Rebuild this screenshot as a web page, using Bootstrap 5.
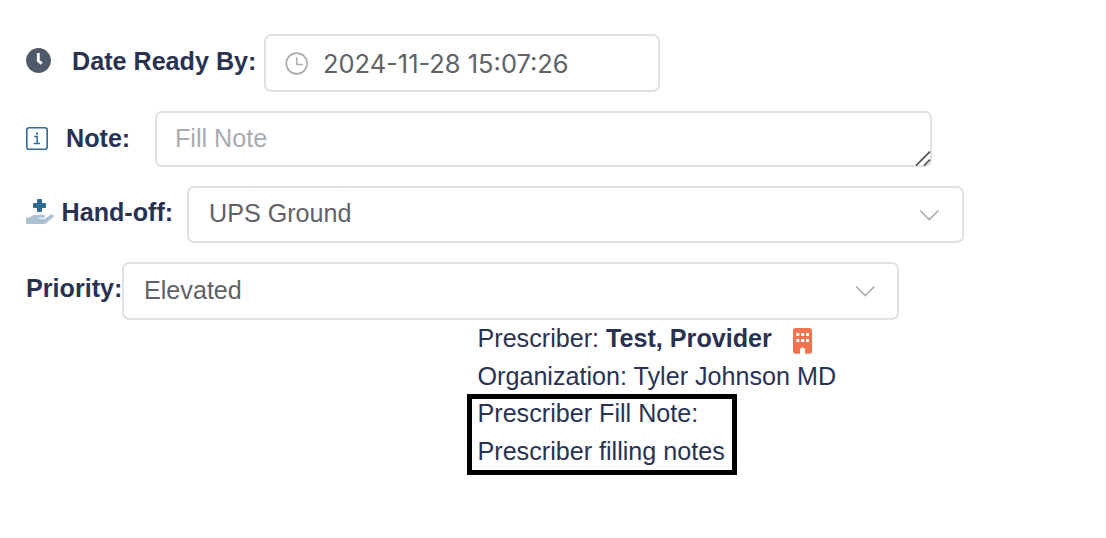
<!DOCTYPE html>
<html lang="en">
<head>
<meta charset="utf-8">
<meta name="viewport" content="width=device-width, initial-scale=1">
<title>Prescription fill</title>
<link href="https://cdn.jsdelivr.net/npm/bootstrap@5.3.0/dist/css/bootstrap.min.css" rel="stylesheet">
<style>
body{font-family:"Liberation Sans",Arial,sans-serif;font-size:25.15px;line-height:37.6px;color:#2a3252;background:#fff;overflow:hidden}
.order-form{padding:34px 0 0 26px}
.field-row{margin-bottom:19px}
.field-name{font-weight:700;white-space:nowrap;flex:none}
.field-name svg{flex:none;display:block}
.field-box{border:2px solid #dfe0e8;border-radius:7px;padding:0 21px 0 20px;color:#606266;line-height:37.6px;background:#fff;height:58px;width:777px;flex:none}
.date-box{width:396px;padding-left:19px;font-family:Inter,sans-serif;font-size:25.45px}
.date-box span{margin:1px 0 0 14px}
.note-box{height:56px;color:#a8abb2;padding-left:18px}
.hand-box{height:57px;padding-right:22px}
.hand-box span{margin-top:-1px}
.grip{right:-1px;bottom:-1px}
.w-date{width:238px;padding-bottom:3px}
.w-date svg{margin-top:-2px}
.w-note{width:129px;padding-bottom:1px}
.w-hand{width:161px;padding-bottom:4px}
.w-hand svg{margin-top:-2px}
.w-prio{width:96px;padding-bottom:5px}
.provider-info{margin-left:477.5px}
.fill-note{border:5px solid #000;margin-left:-10.5px;width:270px;height:81px;padding-left:5.5px;margin-top:-1px}
.fill-note div{margin-top:-4px}
</style>
</head>
<body>
<main class="order-form">
  <div class="field-row d-flex align-items-center">
    <div class="field-name w-date d-flex align-items-center">
      <svg width="25" height="25" viewBox="0 0 25 25"><circle cx="12.5" cy="12.5" r="12.4" fill="#4e5a6a"/><path d="M12.3 5v7.8l3.5 2.9" fill="none" stroke="#fff" stroke-width="2.8"/></svg>
      <span style="margin-left:21px">Date Ready By:</span>
    </div>
    <div class="field-box date-box d-flex align-items-center">
      <svg class="flex-shrink-0" width="24" height="24" viewBox="0 0 24 24" fill="none" stroke="#a8abb2" stroke-width="1.6"><circle cx="11.7" cy="12.5" r="10.4"/><path d="M11.7 6.200V13.500h6.200"/></svg>
      <span>2024-11-28 15:07:26</span>
    </div>
  </div>
  <div class="field-row d-flex align-items-center">
    <div class="field-name w-note d-flex align-items-center">
      <svg width="22" height="23" viewBox="0 0 22 23" fill="none" stroke="#2d6a94"><rect x=".8" y=".8" width="20.4" height="21.4" rx="2.3" stroke-width="1.6"/><path d="M8.2 9.6h3v7M7.800 16.600h6.300" stroke-width="1.5"/><path d="M10 6.600h2" stroke-width="2"/></svg>
      <span style="margin-left:18px">Note:</span>
    </div>
    <div class="field-box note-box position-relative d-flex align-items-center"><span>Fill Note</span>
      <svg class="grip position-absolute" width="16" height="15" viewBox="0 0 16 15" fill="none" stroke="#555" stroke-width="1.8"><path d="M1 14.600 15 .6M9 14.600l6-6"/></svg>
    </div>
  </div>
  <div class="field-row d-flex align-items-center">
    <div class="field-name w-hand d-flex align-items-center">
      <svg width="28" height="26" viewBox="0 0 28 26"><path d="M12 0h3q1 0 1 1v3h3q1 0 1 1v3q0 1-1 1h-3v3q0 1-1 1h-3q-1 0-1-1V9H8Q7 9 7 8V5q0-1 1-1h3V1q0-1 1-1z" fill="#2d6a94"/><path d="M1 18.500h2.500l2-1.500Q7.500 15.800 10 15.800h7.200q1.700 0 1.700 1.500t-1.700 1.500h-4.500v1h6.100l5.400-3.800q1.800-1.100 3 .1 1.100 1.300-.3 2.500l-6.100 4.800Q19.300 25 17.200 25H1q-1 0-1-1v-4.500q0-1 1-1z" fill="#a9c1d1"/></svg>
      <span style="margin-left:7.5px">Hand-off:</span>
    </div>
    <div class="field-box hand-box d-flex align-items-center justify-content-between"><span>UPS Ground</span>
      <svg width="21" height="12" viewBox="0 0 21 12" fill="none" stroke="#a8abb2" stroke-width="1.6"><path d="m1.200 1.500 9.100 9 9.100-9"/></svg>
    </div>
  </div>
  <div class="d-flex align-items-center">
    <div class="field-name w-prio">Priority:</div>
    <div class="field-box d-flex align-items-center justify-content-between"><span>Elevated</span>
      <svg width="21" height="12" viewBox="0 0 21 12" fill="none" stroke="#a8abb2" stroke-width="1.6"><path d="m1.200 1.500 9.100 9 9.100-9"/></svg>
    </div>
  </div>
</main>
<section class="provider-info">
  <div class="d-flex align-items-center">
    <span>Prescriber: <b>Test, Provider</b></span>
    <svg style="margin:5px 0 0 21px" width="19" height="26" viewBox="0 0 19 26"><path fill="#f07450" fill-rule="evenodd" d="M2.500 0h14Q19 0 19 2.500v21q0 2.300-2.500 2.300H12V22q0-2.500-2.500-2.500T7 22v3.800H2.500Q0 25.800 0 23.500v-21Q0 0 2.500 0zM3.300 5v3h3V5zm4.800 0v3h3V5zm4.800 0v3h3V5zM3.300 11v3h3v-3zm4.800 0v3h3v-3zm4.800 0v3h3v-3z"/></svg>
  </div>
  <div>Organization: Tyler Johnson MD</div>
  <div class="fill-note"><div>Prescriber Fill Note:<br>Prescriber filling notes</div></div>
</section>
<script src="https://cdn.jsdelivr.net/npm/bootstrap@5.3.0/dist/js/bootstrap.bundle.min.js"></script>
</body>
</html>
